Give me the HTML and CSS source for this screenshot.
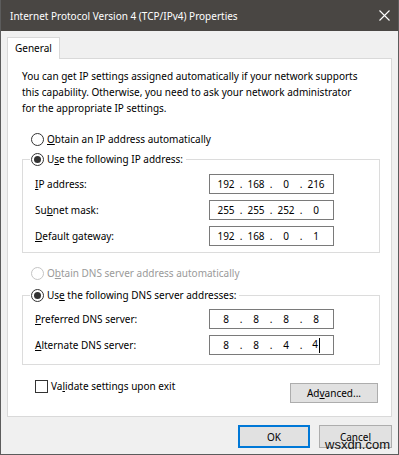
FILE: index.html
```html
<!DOCTYPE html>
<html lang="en">
<head>
<meta charset="utf-8">
<title>Internet Protocol Version 4 (TCP/IPv4) Properties</title>
<link rel="stylesheet" href="styles.css">
</head>
<body>
<div class="window">
  <div class="titlebar">
    <span class="title">Internet Protocol Version 4 (TCP/IPv4) Properties</span>
    <svg class="close" width="11" height="11" viewBox="0 0 11 11"><path d="M0.5 0.5 L10.5 10.5 M10.5 0.5 L0.5 10.5" stroke="#ffffff" stroke-width="1.1" fill="none"/></svg>
  </div>
  <div class="client">
    <div class="tabs"><div class="tab">General</div></div>
    <div class="panel">
      <p class="intro">You can get IP settings assigned automatically if your network supports<br>this capability. Otherwise, you need to ask your network administrator<br>for the appropriate IP settings.</p>

      <div class="radio-row first-radio"><span class="radio"></span><span class="rtext"><u>O</u>btain an IP address automatically</span></div>

      <div class="group ip-group">
        <div class="legend"><span class="radio checked"></span><span class="rtext">U<u>s</u>e the following IP address:</span></div>
        <div class="field first-field"><span class="label"><u>I</u>P address:</span><div class="ipbox"><span class="oct">192</span><span class="dot">.</span><span class="oct">168</span><span class="dot">.</span><span class="oct">0</span><span class="dot">.</span><span class="oct">216</span></div></div>
        <div class="field"><span class="label">Su<u>b</u>net mask:</span><div class="ipbox"><span class="oct">255</span><span class="dot">.</span><span class="oct">255</span><span class="dot">.</span><span class="oct">252</span><span class="dot">.</span><span class="oct">0</span></div></div>
        <div class="field"><span class="label"><u>D</u>efault gateway:</span><div class="ipbox"><span class="oct">192</span><span class="dot">.</span><span class="oct">168</span><span class="dot">.</span><span class="oct">0</span><span class="dot">.</span><span class="oct">1</span></div></div>
      </div>

      <div class="radio-row disabled dns-auto"><span class="radio"></span><span class="rtext">O<u>b</u>tain DNS server address automatically</span></div>

      <div class="group dns-group">
        <div class="legend"><span class="radio checked"></span><span class="rtext">Us<u>e</u> the following DNS server addresses:</span></div>
        <div class="field first-field"><span class="label"><u>P</u>referred DNS server:</span><div class="ipbox"><span class="oct">8</span><span class="dot">.</span><span class="oct">8</span><span class="dot">.</span><span class="oct">8</span><span class="dot">.</span><span class="oct">8</span></div></div>
        <div class="field"><span class="label"><u>A</u>lternate DNS server:</span><div class="ipbox"><span class="oct">8</span><span class="dot">.</span><span class="oct">8</span><span class="dot">.</span><span class="oct">4</span><span class="dot">.</span><span class="oct">4<span class="caret"></span></span></div></div>
      </div>

      <div class="bottom-row">
        <div class="check-row"><span class="checkbox"></span><span class="rtext">Va<u>l</u>idate settings upon exit</span></div>
        <div class="btn advanced">Ad<u>v</u>anced...</div>
      </div>
    </div>
    <div class="buttons">
      <div class="btn ok">OK</div>
      <div class="btn cancel">Cancel</div>
    </div>
  </div>
  <div class="watermark">wsxdn.com</div>
</div>
</body>
</html>
```
FILE: styles.css
```css
* { box-sizing: border-box; }
html, body { margin: 0; padding: 0; }
body {
  width: 399px;
  height: 455px;
  overflow: hidden;
  background: #f0f0f0;
  font-family: "Noto Sans", "Open Sans", sans-serif;
  font-size: 10px;
  color: #000;
}
u { text-decoration: underline; text-underline-offset: 1px; }

.window {
  position: relative;
  width: 399px;
  height: 455px;
  border: 1px solid #5c5c5c;
  border-top: none;
  display: flex;
  flex-direction: column;
}

.titlebar {
  height: 31px;
  flex: none;
  background: #494643;
  color: #ffffff;
  display: flex;
  align-items: center;
  padding-left: 9px;
  padding-right: 8px;
}
.title { font-size: 10px; }
.close { margin-left: auto; display: block; }

.client { padding: 6px 6px 0 6px; }

.tabs { display: flex; }
.tab {
  position: relative;
  z-index: 1;
  width: 53px;
  height: 22px;
  margin-bottom: -1px;
  background: #fff;
  border: 1px solid #d9d9d9;
  border-bottom: none;
  padding-left: 7px;
  line-height: 21px;
}

.panel {
  height: 359px;
  background: #fff;
  border: 1px solid #d9d9d9;
  padding: 9px 11px 0 14px;
}

.intro { margin: 0; line-height: 16px; white-space: nowrap; }

.radio-row, .legend, .check-row {
  display: flex;
  align-items: center;
  height: 16px;
  white-space: nowrap;
}
.radio-row .radio { margin-left: 9px; }
.first-radio { margin-top: 15px; }
.rtext { margin-left: 3px; }

.radio {
  position: relative;
  flex: none;
  width: 13px;
  height: 13px;
  border: 1px solid #333;
  border-radius: 50%;
  background: #fff;
}
.radio.checked::after {
  content: "";
  position: absolute;
  left: 2px;
  top: 2px;
  width: 7px;
  height: 7px;
  border-radius: 50%;
  background: #333;
}
.disabled { color: #9a9a9a; }
.disabled .radio { border-color: #c4c4c4; }

.group {
  border: 1px solid #dcdcdc;
}
.ip-group { margin-top: 12px; padding-bottom: 6px; }
.dns-group { margin-top: 14px; padding-bottom: 9px; }
.legend {
  width: fit-content;
  margin-top: -9px;
  margin-left: 7px;
  padding: 0 3px 0 1px;
  background: #fff;
}

.field {
  display: flex;
  align-items: center;
  height: 20px;
  margin-top: 6px;
  margin-left: 12px;
}
.ip-group .first-field { margin-top: 7px; }
.dns-group .first-field { margin-top: 6px; }
.label { width: 174px; flex: none; }

.ipbox {
  display: flex;
  align-items: center;
  width: 125px;
  height: 20px;
  border: 1px solid #7a7a7a;
  padding-left: 3px;
}
.oct { width: 26px; text-align: center; }
.dot { width: 4px; text-align: center; }
.caret {
  display: inline-block;
  width: 1px;
  height: 15px;
  background: #000;
  vertical-align: middle;
  margin-left: 1px;
}

.dns-auto { margin-top: 12px; }

.bottom-row {
  display: flex;
  justify-content: space-between;
  align-items: flex-start;
  margin-top: 13px;
}
.check-row { margin-left: 13px; }
.checkbox {
  flex: none;
  width: 13px;
  height: 13px;
  border: 1px solid #333;
  background: #fff;
}

.btn {
  display: flex;
  align-items: center;
  justify-content: center;
  background: #e1e1e1;
  border: 1px solid #adadad;
}
.advanced {
  width: 88px;
  height: 20px;
  margin-top: 5px;
  margin-right: 2px;
}

.buttons {
  display: flex;
  justify-content: flex-end;
  gap: 9px;
  margin-top: 8px;
}
.ok { width: 72px; height: 23px; border: 2px solid #0078d7; }
.cancel { width: 73px; height: 23px; }

.watermark {
  position: absolute;
  left: 324px;
  top: 437px;
  font-family: "Liberation Sans", Arial, sans-serif;
  font-size: 13px;
  line-height: 15px;
  color: #111;
}
```
